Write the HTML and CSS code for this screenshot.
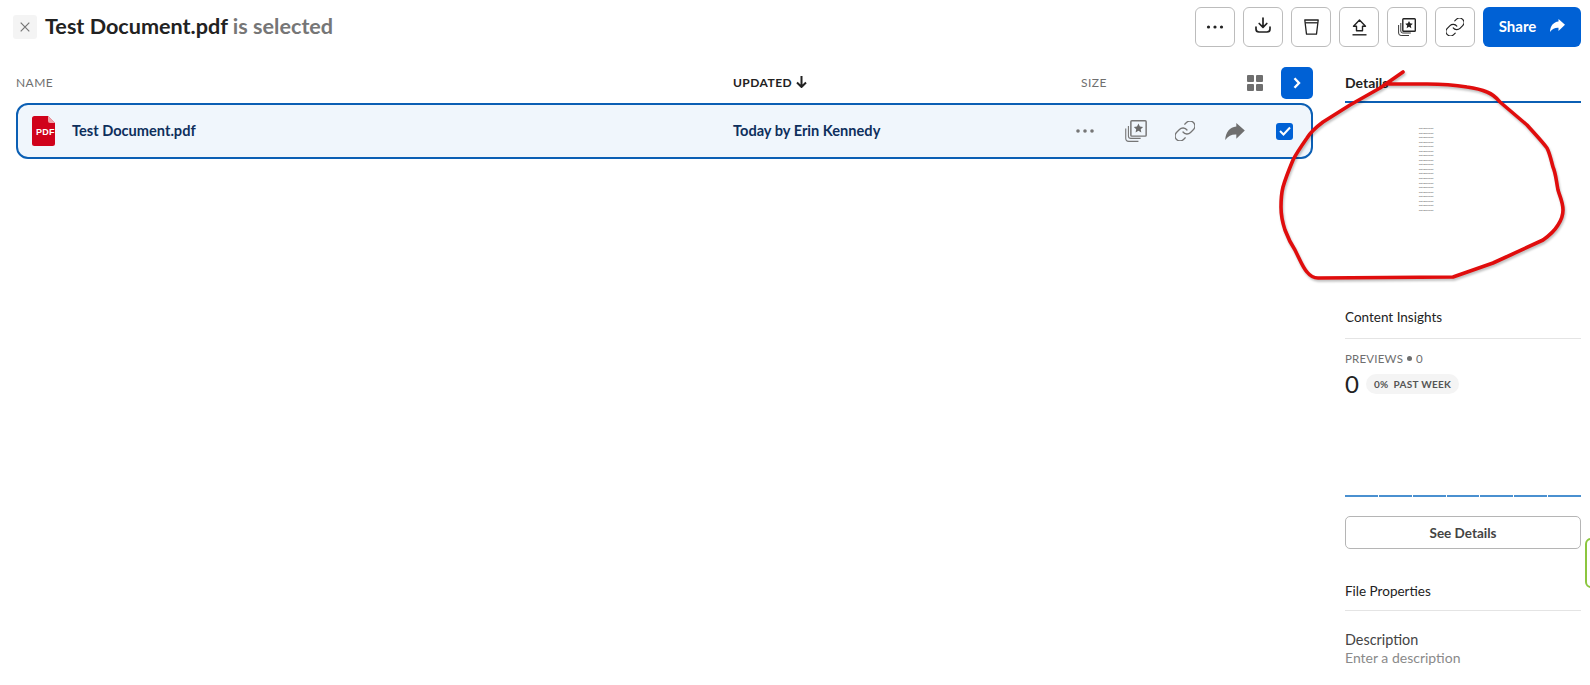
FILE: index.html
```html
<!DOCTYPE html>
<html lang="en">
<head>
<meta charset="utf-8">
<title>Test Document.pdf is selected</title>
<link rel="stylesheet" href="styles.css">
</head>
<body>
<header class="topbar">
  <button class="close" aria-label="Clear selection">
    <svg width="10" height="10" viewBox="0 0 10 10"><path d="M.7.7l8.6 8.6M9.300.7L.7 9.300" stroke="#767676" stroke-width="1.200" fill="none"/></svg>
  </button>
  <h1 class="title">Test Document.pdf <span class="title-muted">is selected</span></h1>
  <div class="actions">
    <button class="tool"><svg width="18" height="4" viewBox="0 0 18 4"><circle cx="2.500" cy="2" r="1.600" fill="#222"/><circle cx="9" cy="2" r="1.600" fill="#222"/><circle cx="15.500" cy="2" r="1.600" fill="#222"/></svg></button>
    <button class="tool tool-up"><svg width="16" height="16" viewBox="0 0 16 16" fill="none" stroke="#222" stroke-width="1.700" stroke-linecap="round" stroke-linejoin="round"><path d="M8 1v9M4.200 6.500L8 10.300l3.800-3.800"/><path d="M1 10v2a3 3 0 0 0 3 3h8a3 3 0 0 0 3-3v-2"/></svg></button>
    <button class="tool"><svg width="15" height="16" viewBox="0 0 15 16" fill="none" stroke="#222" stroke-width="1.300" stroke-linejoin="round"><path d="M.8 1h13.400l-1.700 14.200H2.500z"/><path d="M1.200 3.800h12.600"/></svg></button>
    <button class="tool"><svg width="15" height="17" viewBox="0 0 15 17" fill="none" stroke="#222" stroke-width="1.400" stroke-linejoin="round"><path d="M7.500 1L1.500 7.200H4.500v4.600h6V7.200h3z"/><path d="M.5 15.800h14"/></svg></button>
    <button class="tool"><svg width="18" height="18" viewBox="0 0 18 18" fill="none" stroke="#222"><path d="M2.800 5v8a2 2 0 0 0 2 2h8M.6 7v8a2.500 2.500 0 0 0 2.500 2.500H11" stroke-width=".9"/><rect x="4.800" y=".7" width="12.500" height="12.500" rx=".8" stroke-width="1.400"/><path d="M11 2.900l1.150 2.450 2.650.3-1.950 1.850.5 2.700-2.350-1.350-2.350 1.350.5-2.700L7.200 5.650l2.650-.3z" fill="#222" stroke="none"/></svg></button>
    <button class="tool"><svg width="18" height="18" viewBox="2 2 20 20" fill="none" stroke="#222" stroke-width="1.300" stroke-linecap="round"><path d="M10 13a5 5 0 0 0 7.540.54l3-3a5 5 0 0 0-7.070-7.070l-1.720 1.710"/><path d="M14 11a5 5 0 0 0-7.540-.54l-3 3a5 5 0 0 0 7.070 7.070l1.710-1.710"/></svg></button>
    <button class="share">Share
      <svg width="15" height="13" viewBox="0 0 15 13"><path d="M8.500 0L15 5.800 8.500 12V8.800C5 8.600 2.500 9.800 0 13 .3 7 3.500 3 8.500 2.600z" fill="#fff"/></svg>
    </button>
  </div>
</header>

<main class="content">
  <section class="list">
    <div class="list-head">
      <span class="col-name">NAME</span>
      <span class="col-updated">UPDATED
        <svg width="11" height="12" viewBox="0 0 11 12" fill="none" stroke="#222" stroke-width="2"><path d="M5.500 0v11M1 6.500L5.500 11 10 6.500"/></svg>
      </span>
      <span class="col-size">SIZE</span>
      <svg class="grid-icon" width="16" height="16" viewBox="0 0 16 16" fill="#6f6f6f"><rect width="7" height="7" rx="1"/><rect x="9" width="7" height="7" rx="1"/><rect y="9" width="7" height="7" rx="1"/><rect x="9" y="9" width="7" height="7" rx="1"/></svg>
      <button class="toggle"><svg width="8" height="12" viewBox="0 0 8 12" fill="none" stroke="#fff" stroke-width="2.400"><path d="M1.500 1.200L6 6l-4.500 4.800"/></svg></button>
    </div>
    <div class="row">
      <svg class="pdf" width="23" height="30" viewBox="0 0 23 30"><path d="M2.500 0H16l7 7v20.500a2.500 2.500 0 0 1-2.500 2.500h-18A2.500 2.500 0 0 1 0 27.500v-25A2.500 2.500 0 0 1 2.500 0z" fill="#d0021b"/><path d="M16 0l7 7h-5a2 2 0 0 1-2-2z" fill="#f0a0a8"/></svg>
      <span class="pdf-label">PDF</span>
      <span class="row-name">Test Document.pdf</span>
      <span class="row-updated">Today by Erin Kennedy</span>
      <div class="row-icons">
        <svg width="20" height="4" viewBox="0 0 20 4" fill="#767676"><circle cx="3" cy="2" r="1.800"/><circle cx="10" cy="2" r="1.800"/><circle cx="17" cy="2" r="1.800"/></svg>
        <svg class="ri-star" width="22" height="22" viewBox="0 0 18 18" fill="none" stroke="#767676"><path d="M2.800 5v8a2 2 0 0 0 2 2h8M.6 7v8a2.500 2.500 0 0 0 2.500 2.500H11" stroke-width=".9"/><rect x="4.800" y=".7" width="12.500" height="12.500" rx=".8" stroke-width="1.200"/><path d="M11 2.900l1.150 2.450 2.650.3-1.950 1.850.5 2.700-2.350-1.350-2.350 1.350.5-2.700L7.200 5.650l2.650-.3z" fill="#6a6a6a" stroke="none"/></svg>
        <svg class="ri-link" width="20" height="20" viewBox="2 2 20 20" fill="none" stroke="#767676" stroke-width="1.300" stroke-linecap="round"><path d="M10 13a5 5 0 0 0 7.540.54l3-3a5 5 0 0 0-7.070-7.070l-1.720 1.710"/><path d="M14 11a5 5 0 0 0-7.540-.54l-3 3a5 5 0 0 0 7.070 7.070l1.710-1.710"/></svg>
        <svg class="ri-share" width="20" height="17" viewBox="0 0 15 13"><path d="M8.500 0L15 5.800 8.500 12V8.800C5 8.600 2.500 9.800 0 13 .3 7 3.500 3 8.500 2.600z" fill="#6f6f6f"/></svg>
        <span class="check"><svg width="12" height="10" viewBox="0 0 12 10" fill="none" stroke="#fff" stroke-width="2"><path d="M1 5l3.500 3.500L11 1.500"/></svg></span>
      </div>
    </div>
  </section>

  <aside class="side">
    <div class="tab">Details</div>
    <div class="preview">
      <p>Test Document</p><p>Test Document</p><p>Test Document</p><p>Test Document</p><p>Test Document</p><p>Test Document</p><p>Test Document</p><p>Test Document</p><p>Test Document</p><p>Test Document</p><p>Test Document</p><p>Test Document</p><p>Test Document</p><p>Test Document</p><p>Test Document</p><p>Test Document</p><p>Test Document</p><p>Test Document</p><p>Test Document</p>
    </div>
    <h2 class="sec-title insights">Content Insights</h2>
    <div class="stat-label">PREVIEWS <span class="bullet"></span> 0</div>
    <div class="stat">
      <span class="stat-num">0</span>
      <span class="pill"><span>0%</span> PAST WEEK</span>
    </div>
    <div class="chart"><i></i><i></i><i></i><i></i><i></i><i></i><i></i></div>
    <button class="details-btn">See Details</button>
    <h2 class="sec-title props">File Properties</h2>
    <div class="field-label">Description</div>
    <div class="field-value">Enter a description</div>
  </aside>
</main>

<div class="feedback-tab"></div>

<svg class="scribble" width="1590" height="685" viewBox="0 0 1590 685" fill="none">
  <path d="M1403 72L1380 88L1350 105L1323 122C1315 128 1310 133 1307 138C1300 148 1296 154 1293 160C1288 172 1285 180 1283 187C1281 195 1281 200 1281 207C1281 216 1283 224 1285 230C1288 238 1291 244 1295 250C1300 260 1303 268 1307 272C1311 277 1314 278 1318 278L1453 277L1493 263L1543 240C1550 235 1555 230 1558 225C1562 219 1563 215 1563 210C1563 202 1560 197 1558 190C1556 180 1556 174 1553 167C1551 160 1550 154 1547 148C1541 140 1534 133 1527 125L1500 102C1496 97 1492 94 1487 92C1480 89 1474 88 1467 87C1455 85 1440 84 1427 84H1388"/>
</svg>
</body>
</html>
```
FILE: styles.css
```css
* { box-sizing: border-box; }
html, body { margin: 0; height: 100%; }
body {
  position: relative;
  overflow: hidden;
  background: #fff;
  color: #222;
  font-family: Lato, "Open Sans", sans-serif;
}
button { font-family: inherit; cursor: pointer; }

.topbar {
  display: flex;
  align-items: center;
  height: 54px;
  padding: 7px 9px 7px 13px;
}
.close {
  display: flex;
  align-items: center;
  justify-content: center;
  width: 24px;
  height: 24px;
  padding: 0;
  border: 0;
  border-radius: 3px;
  background: #f4f4f4;
}
.title {
  margin: 0 0 2px 8px;
  font-size: 21.600px;
  font-weight: 700;
  color: #222;
}
.title-muted { color: #767676; }
.actions { display: flex; gap: 8px; margin-left: auto; }
.tool {
  display: flex;
  align-items: center;
  justify-content: center;
  width: 40px;
  height: 40px;
  padding: 0;
  background: #fff;
  border: 1px solid #bcbcbc;
  border-radius: 6px;
}
.tool-up { padding-bottom: 5px; }
.share {
  display: flex;
  align-items: center;
  justify-content: center;
  gap: 14px;
  width: 98px;
  height: 40px;
  padding: 0 0 3px;
  border: 0;
  border-radius: 6px;
  background: #0061d5;
  color: #fff;
  font-size: 15px;
  font-weight: 700;
}

.content { display: flex; padding-left: 16px; }
.list { width: 1297px; flex: none; }
.list-head {
  display: flex;
  align-items: center;
  height: 32px;
  margin: 13px 0 4px;
  font-size: 12px;
  letter-spacing: .45px;
  color: #6f6f6f;
}
.col-name { width: 717px; margin-bottom: 2px; }
.col-updated {
  display: flex;
  align-items: center;
  gap: 4px;
  width: 348px;
  margin-bottom: 2px;
  color: #222;
  font-weight: 700;
}
.col-size { width: 166px; margin-bottom: 2px; }
.grid-icon { flex: none; }
.toggle {
  display: flex;
  align-items: center;
  justify-content: center;
  width: 32px;
  height: 32px;
  margin-left: 18px;
  padding: 0;
  border: 0;
  border-radius: 5px;
  background: #0061d5;
}

.row {
  position: relative;
  display: flex;
  align-items: center;
  height: 56px;
  padding-left: 14px;
  border: 2px solid #0b5fb4;
  border-radius: 12px;
  background: #f0f6fc;
  color: #0e2f5c;
  font-size: 14.600px;
  font-weight: 700;
}
.pdf { flex: none; margin-right: 1px; }
.pdf-label {
  position: absolute;
  left: 18px;
  top: 22px;
  color: #fff;
  font-family: "Liberation Sans Narrow", "Liberation Sans", sans-serif;
  font-size: 9px;
  font-weight: 700;
  letter-spacing: .2px;
}
.row-name { width: 661px; margin: 0 0 1px 16px; }
.row-updated { width: 342px; margin-bottom: 1px; }
.row-icons { display: flex; align-items: center; }
.ri-star { margin-left: 30px; }
.ri-link { margin-left: 28px; }
.ri-share { margin-left: 30px; }
.check {
  display: flex;
  align-items: center;
  justify-content: center;
  width: 17px;
  height: 17px;
  margin-left: 31px;
  border-radius: 3px;
  background: #0061d5;
}

.side { width: 236px; flex: none; margin: 13px 0 0 32px; }
.tab {
  height: 36px;
  padding-top: 7px;
  border-bottom: 2px solid #0b5fb4;
  font-size: 14px;
  font-weight: 700;
}
.preview {
  display: flex;
  flex-direction: column;
  align-items: center;
  height: 199px;
  padding: 23px 74px 0 0;
}
.preview p {
  margin: 0;
  height: 4.550px;
  font-size: 2.200px;
  line-height: 4.550px;
  color: #555;
  white-space: nowrap;
}
.sec-title {
  margin: 0;
  font-size: 13.500px;
  font-weight: 400;
  color: #222;
  border-bottom: 1px solid #e4e4e4;
}
.insights { height: 37px; padding-top: 7px; }
.stat-label {
  display: flex;
  align-items: center;
  gap: 4px;
  margin-top: 13px;
  font-size: 11.500px;
  color: #6f6f6f;
  letter-spacing: .2px;
}
.bullet { width: 5px; height: 5px; border-radius: 50%; background: #6f6f6f; }
.stat { display: flex; align-items: center; gap: 7px; margin-top: 5px; }
.stat-num { font-size: 24px; font-weight: 400; line-height: 28px; }
.pill {
  display: flex;
  align-items: center;
  gap: 5px;
  height: 20px;
  padding: 0 8px;
  border-radius: 10px;
  background: #f4f4f4;
  color: #555;
  font-size: 10px;
  font-weight: 700;
  letter-spacing: .3px;
}
.chart { display: flex; gap: 1px; margin-top: 97px; }
.chart i { flex: 1; height: 2px; background: #4a90d0; }
.details-btn {
  display: block;
  width: 100%;
  height: 33px;
  margin-top: 19px;
  padding: 0;
  border: 1px solid #b5b5b5;
  border-radius: 5px;
  background: #fff;
  color: #444;
  font-size: 13.500px;
  font-weight: 700;
}
.props { height: 36px; margin-top: 26px; padding-top: 8px; }
.field-label { margin-top: 20px; font-size: 14.400px; color: #444; line-height: 18px; }
.field-value { font-size: 14px; color: #8a8a8a; line-height: 18px; }

.feedback-tab {
  position: absolute;
  left: 1585px;
  top: 538px;
  width: 12px;
  height: 50px;
  border: 2px solid #8cc63f;
  border-radius: 6px;
  background: #fff;
}
.scribble {
  position: absolute;
  left: 0;
  top: 0;
  pointer-events: none;
  stroke: #e00d0d;
  stroke-width: 3.600;
  stroke-linecap: round;
  stroke-linejoin: round;
  filter: drop-shadow(1px 2px 1px rgba(0, 0, 0, .25));
}
```
